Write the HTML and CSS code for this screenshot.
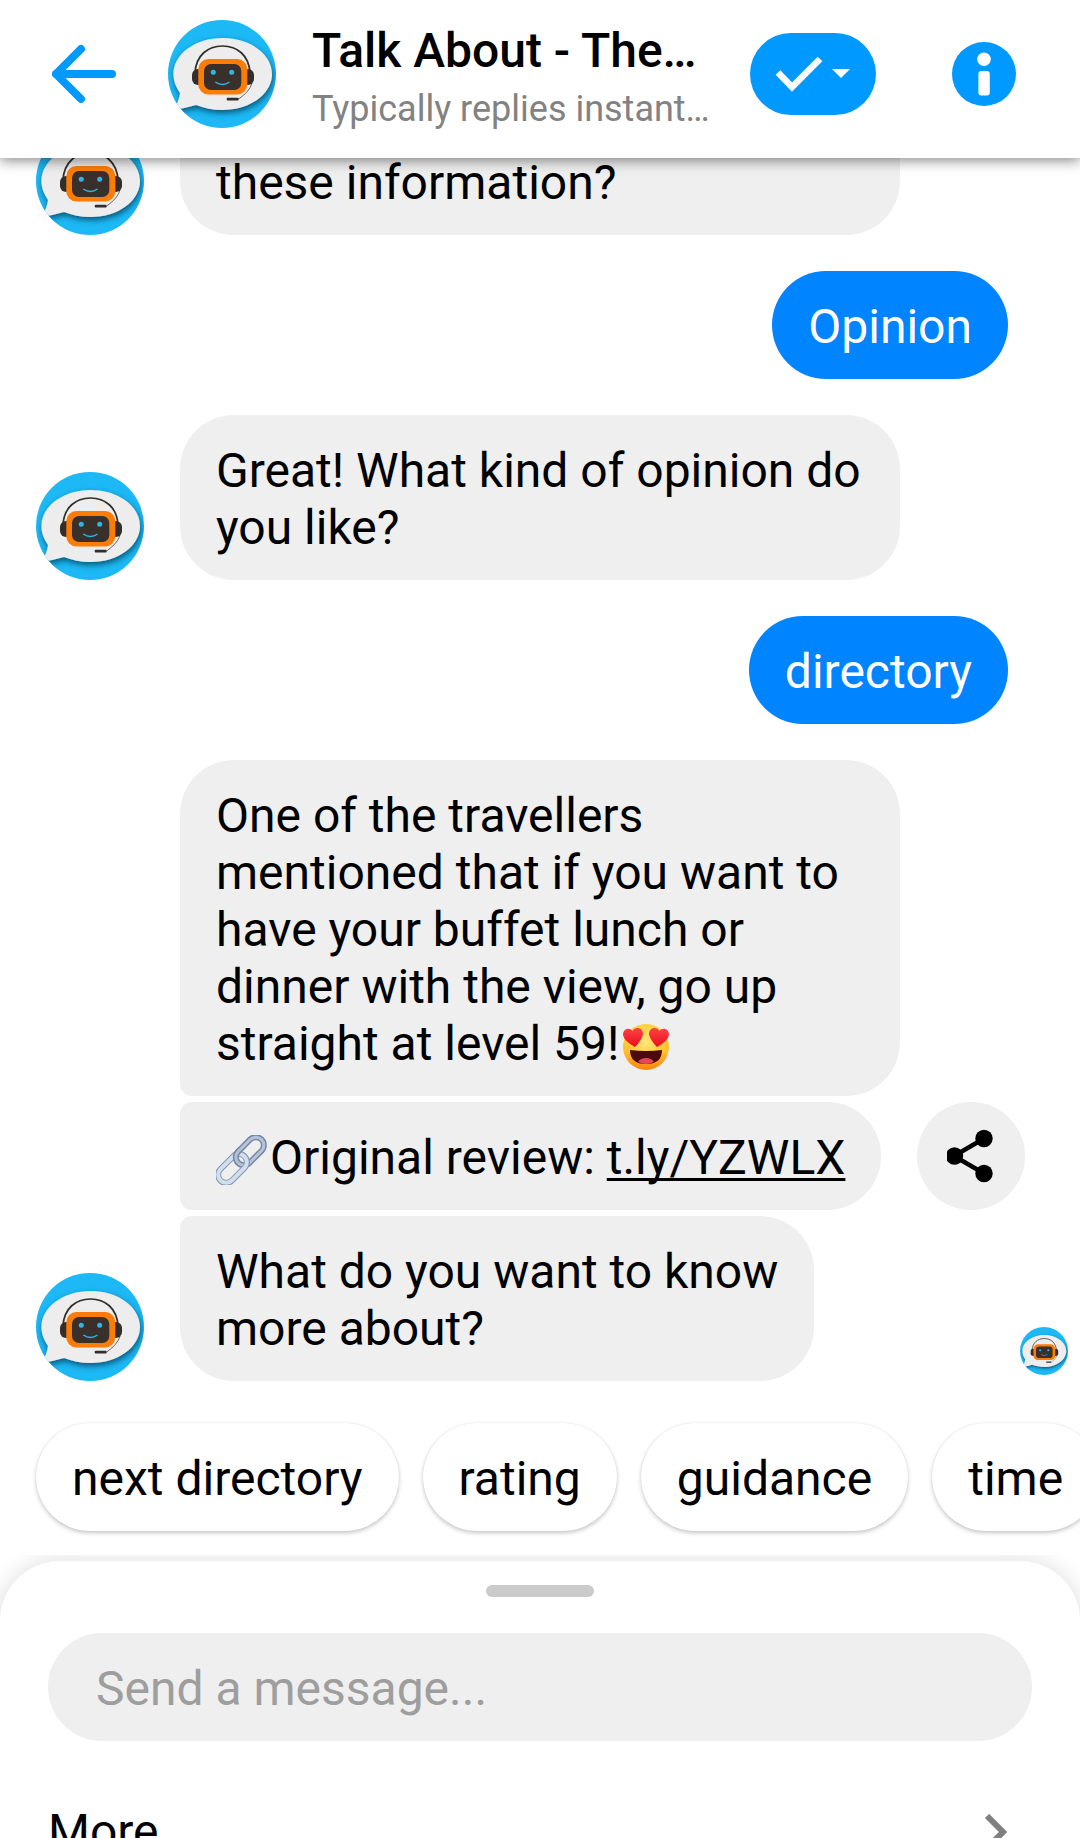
FILE: index.html
```html
<!DOCTYPE html>
<html lang="en">
<head>
<meta charset="utf-8">
<meta name="viewport" content="width=device-width, initial-scale=1">
<title>Talk About - The…</title>
<link rel="stylesheet" href="styles.css">
</head>
<body>
<svg class="defs" aria-hidden="true">
  <defs>
    <clipPath id="disc"><circle cx="54" cy="54" r="54"/></clipPath>
    <filter id="soft" x="-20%" y="-20%" width="140%" height="150%">
      <feDropShadow dx="1" dy="3" stdDeviation="3" flood-color="#003048" flood-opacity="0.75"/>
    </filter>
    <linearGradient id="face" x1="0" y1="0" x2="0" y2="1">
      <stop offset="0" stop-color="#ffcf33"/><stop offset="0.6" stop-color="#ffc02a"/><stop offset="1" stop-color="#ff8410"/>
    </linearGradient>
    <radialGradient id="glow" cx="0.5" cy="0.4" r="0.45">
      <stop offset="0" stop-color="#ffe67c"/><stop offset="1" stop-color="#ffe67c" stop-opacity="0"/>
    </radialGradient>
    <linearGradient id="heart" x1="0" y1="0" x2="0" y2="1">
      <stop offset="0" stop-color="#ff4248"/><stop offset="1" stop-color="#e80f1c"/>
    </linearGradient>
    <symbol id="bot" viewBox="0 0 108 108">
      <g clip-path="url(#disc)">
        <rect width="108" height="108" fill="#1cb9f6"/>
        <g fill="#ededed" filter="url(#soft)">
          <path d="M54.700 18C82 18 104 34 104 54S82 90 54.700 90C45 90 36 88 28 85Q18 88 5 90Q11 82 12 73C8 67 5.400 61 5.400 54C5.400 34 27.500 18 54.700 18Z"/>
        </g>
        <path d="M27 53C28 35 40 26 54.500 26S81 35 82 53" fill="none" stroke="#332e2a" stroke-width="1.700"/>
        <rect x="24" y="49" width="12" height="16" rx="6" fill="#332e2a"/>
        <rect x="74" y="49" width="12" height="16" rx="6" fill="#332e2a"/>
        <rect x="30.300" y="39" width="49" height="35.500" rx="10" fill="#fb7d07"/>
        <rect x="36" y="44" width="37.300" height="26" rx="7" fill="#39302b"/>
        <circle cx="45.300" cy="52.300" r="2.500" fill="#2bb8e6"/>
        <circle cx="63.700" cy="52.300" r="2.500" fill="#2bb8e6"/>
        <path d="M47.300 62Q54.500 67 61.500 62" fill="none" stroke="#2bb8e6" stroke-width="1.400"/>
        <path d="M84 63Q82 71 70.700 79" fill="none" stroke="#332e2a" stroke-width="0.700"/>
        <rect x="58.700" y="77.800" width="12" height="2.700" rx="1" fill="#332e2a"/>
      </g>
    </symbol>
  </defs>
</svg>
<div class="app">
  <header class="topbar">
    <button class="icon-button" type="button" aria-label="Back">
      <svg width="64" height="64" viewBox="0 0 64 64" fill="none" stroke="#0099ff" stroke-width="8" stroke-linecap="round" stroke-linejoin="round">
        <path d="M60 32H4M29 7L4 32L29 57"/>
      </svg>
    </button>
    <svg class="avatar" role="img" aria-label="Bot"><use href="#bot"/></svg>
    <div class="heading">
      <h1 class="title">Talk About - The…</h1>
      <p class="subtitle">Typically replies instant…</p>
    </div>
    <button class="status" type="button" aria-label="Mark as done">
      <svg width="76" height="36" viewBox="0 0 76 36">
        <path d="M3 16.500L17 31L45 3" fill="none" stroke="#fff" stroke-width="6.500"/>
        <path d="M57 13H75L66 22Z" fill="#fff"/>
      </svg>
    </button>
    <button class="icon-button" type="button" aria-label="Details">
      <svg width="64" height="64" viewBox="0 0 64 64">
        <circle cx="32" cy="32" r="32" fill="#0099ff"/>
        <circle cx="32" cy="17.300" r="6.800" fill="#fff"/>
        <rect x="26.400" y="29" width="11.400" height="24.500" rx="3" fill="#fff"/>
      </svg>
    </button>
  </header>

  <main class="chat">
    <div class="incoming">
      <svg class="avatar" role="img" aria-label="Bot"><use href="#bot"/></svg>
      <div class="stack stack-wide">
        <p class="bubble bubble-continued">these information?</p>
      </div>
    </div>
    <p class="bubble bubble-own">Opinion</p>
    <div class="incoming">
      <svg class="avatar" role="img" aria-label="Bot"><use href="#bot"/></svg>
      <div class="stack">
        <p class="bubble">Great! What kind of opinion do you like?</p>
      </div>
    </div>
    <p class="bubble bubble-own">directory</p>
    <div class="incoming">
      <svg class="avatar" role="img" aria-label="Bot"><use href="#bot"/></svg>
      <div class="stack">
        <p class="bubble">One of the travellers mentioned that if you want to have your buffet lunch or dinner with the view, go up straight at level 59!<svg class="emoji" viewBox="0 0 54 50" role="img" aria-label="😍">
          <circle cx="27" cy="26" r="23" fill="url(#face)"/>
          <circle cx="27" cy="26" r="23" fill="url(#glow)"/>
          <path d="M11 29Q27 31 43 29Q43 43 27 43T11 29Z" fill="#4b0a0c"/>
          <path d="M19 40.500Q22 37 27 37T35 40.500Q32 43 27 43T19 40.500Z" fill="#e8455a"/>
          <path d="M16 26Q5 20 4 14C4 7 11 6 13.500 10C16 5 24 6 24 13Q23 19 16 26Z" fill="url(#heart)"/>
          <path d="M38 26Q49 20 50 14C50 7 43 6 40.500 10C38 5 30 6 30 13Q31 19 38 26Z" fill="url(#heart)"/>
        </svg></p>
        <div class="shareable">
          <p class="bubble"><svg class="emoji" viewBox="0 0 54 50" role="img" aria-label="🔗" fill="none">
            <g transform="rotate(-45 25 25)">
              <rect x="21" y="17" width="33" height="16" rx="8" stroke="#7a88a4" stroke-width="6"/>
              <rect x="21" y="17" width="33" height="16" rx="8" stroke="#b4c3d9" stroke-width="3"/>
              <rect x="-4" y="17" width="34" height="16" rx="8" stroke="#8495b0" stroke-width="6"/>
              <rect x="-4" y="17" width="34" height="16" rx="8" stroke="#d0deee" stroke-width="4"/>
              <path d="M32 17H29A8 8 0 0 0 21 25" stroke="#7a88a4" stroke-width="6"/>
              <path d="M32 17H29A8 8 0 0 0 21 25" stroke="#b0c0d6" stroke-width="3"/>
            </g>
          </svg>Original review: <a class="link" href="#review">t.ly/YZWLX</a></p>
          <button class="share" type="button" aria-label="Share">
            <svg width="48" height="54" viewBox="0 0 48 54">
              <path d="M37 9.500L7 27L37 44.500" fill="none" stroke="#000" stroke-width="4.500"/>
              <circle cx="37" cy="9.500" r="8.700"/><circle cx="7.500" cy="27" r="8.700"/><circle cx="37" cy="44.500" r="8.700"/>
            </svg>
          </button>
        </div>
        <p class="bubble">What do you want to know<br>more about?</p>
      </div>
      <svg class="seen" role="img" aria-label="Seen"><use href="#bot"/></svg>
    </div>
    <div class="replies">
      <button class="reply" type="button">next directory</button>
      <button class="reply" type="button">rating</button>
      <button class="reply" type="button">guidance</button>
      <button class="reply" type="button">time</button>
    </div>
  </main>

  <footer class="drawer">
    <div class="sheet">
      <div class="handle"></div>
      <input class="composer" type="text" placeholder="Send a message..." aria-label="Send a message">
      <a class="more" href="#more">More
        <svg width="24" height="36" viewBox="0 0 24 36" fill="none" stroke="#808080" stroke-width="6"><path d="M3 2L19 18L3 34"/></svg>
      </a>
    </div>
  </footer>
</div>
</body>
</html>
```
FILE: styles.css
```css
:root {
  --gray: #efefef;
  --brand: #0099ff;
  --own: #0084ff;
  --drawer-peek: 283px;
}

* { box-sizing: border-box; }

body {
  margin: 0;
  background: #fff;
  color: #000;
  font-family: Roboto, "Noto Sans", sans-serif;
  font-size: 48px;
  line-height: 57px;
}

h1, p { margin: 0; }

button {
  border: 0;
  padding: 0;
  background: none;
  color: inherit;
  font: inherit;
}

.defs { position: absolute; width: 0; height: 0; }

.app {
  display: flex;
  flex-direction: column;
  height: 100vh;
  overflow: hidden;
}

/* Top bar */
.topbar {
  z-index: 1;
  display: flex;
  align-items: center;
  flex: none;
  height: 158px;
  padding: 20px 64px 30px 52px;
  background: #fff;
  box-shadow: 0 3px 12px rgba(0, 0, 0, 0.45);
}

.icon-button { display: flex; flex: none; }

.avatar { flex: none; width: 108px; height: 108px; }

.topbar .avatar { margin: 0 36px 0 52px; }

.heading {
  display: flex;
  flex: 1;
  flex-direction: column;
  gap: 9px;
  min-width: 0;
  padding-top: 4px;
  white-space: nowrap;
}

.title { font-size: 48px; font-weight: 500; line-height: 57px; }

.subtitle { color: #828282; font-size: 36px; line-height: 42px; }

.status {
  display: flex;
  align-items: center;
  justify-content: center;
  flex: none;
  width: 126px;
  height: 82px;
  margin: 0 76px 0 36px;
  border-radius: 41px;
  background: var(--brand);
}

/* Conversation */
.chat {
  display: flex;
  flex: 1;
  flex-direction: column;
  justify-content: flex-end;
  gap: 36px;
  min-height: 0;
  padding: 0 12px 24px 36px;
  overflow: hidden;
}

.incoming { display: flex; align-items: flex-end; }

.stack {
  display: flex;
  flex-direction: column;
  align-items: flex-start;
  gap: 6px;
  margin-left: 36px;
}

.stack > .bubble { max-width: 720px; }

.stack-wide { flex: 0 1 720px; align-items: stretch; }

.bubble {
  padding: 27px 36px 24px;
  border-radius: 54px;
  background: var(--gray);
}

.bubble-continued { border-top-left-radius: 0; border-top-right-radius: 0; }

.stack > :not(:last-child).bubble,
.shareable .bubble { border-bottom-left-radius: 12px; }

.stack > :not(:first-child).bubble,
.shareable .bubble { border-top-left-radius: 12px; }

.bubble-own {
  align-self: flex-end;
  margin-right: 60px;
  background: var(--own);
  color: #fff;
}

.emoji {
  width: 54px;
  height: 50px;
  vertical-align: -11px;
}

.link {
  color: inherit;
  font-kerning: none;
  text-decoration: underline;
  text-decoration-skip-ink: none;
  text-decoration-thickness: 3px;
  text-underline-offset: 4px;
}

.shareable { display: flex; gap: 36px; }

.share {
  display: flex;
  align-items: center;
  justify-content: center;
  width: 108px;
  height: 108px;
  border-radius: 50%;
  background: var(--gray);
}

.seen { flex: none; width: 48px; height: 48px; margin: 0 0 6px auto; }

/* The read marker may sit beneath the share button's column */
.incoming:has(.seen) .stack { margin-right: -48px; }

.replies { display: flex; gap: 24px; padding-top: 6px; }

.reply {
  flex: none;
  height: 108px;
  padding: 2px 36px 0;
  border-radius: 54px;
  background: #fff;
  box-shadow: 0 2px 4px rgba(0, 0, 0, 0.22), 0 0 1px rgba(0, 0, 0, 0.12);
}

/* Bottom drawer, shown at its collapsed height */
.drawer {
  flex: none;
  height: var(--drawer-peek);
  padding-top: 6px;
  overflow: hidden;
}

.sheet {
  display: flex;
  flex-direction: column;
  padding: 24px 48px 48px;
  border-radius: 60px 60px 0 0;
  background: #fff;
  box-shadow: 0 0 24px rgba(0, 0, 0, 0.14);
}

.handle {
  align-self: center;
  width: 108px;
  height: 12px;
  border-radius: 6px;
  background: #cbcbcb;
}

.composer {
  width: 100%;
  height: 108px;
  margin: 36px 0 62px;
  padding: 2px 48px 0;
  border: 0;
  border-radius: 54px;
  background: var(--gray);
  color: #000;
  font: inherit;
}

.composer::placeholder { color: #9e9e9e; opacity: 1; }

.more {
  display: flex;
  align-items: center;
  justify-content: space-between;
  padding-right: 24px;
  color: #000;
  text-decoration: none;
}
```
